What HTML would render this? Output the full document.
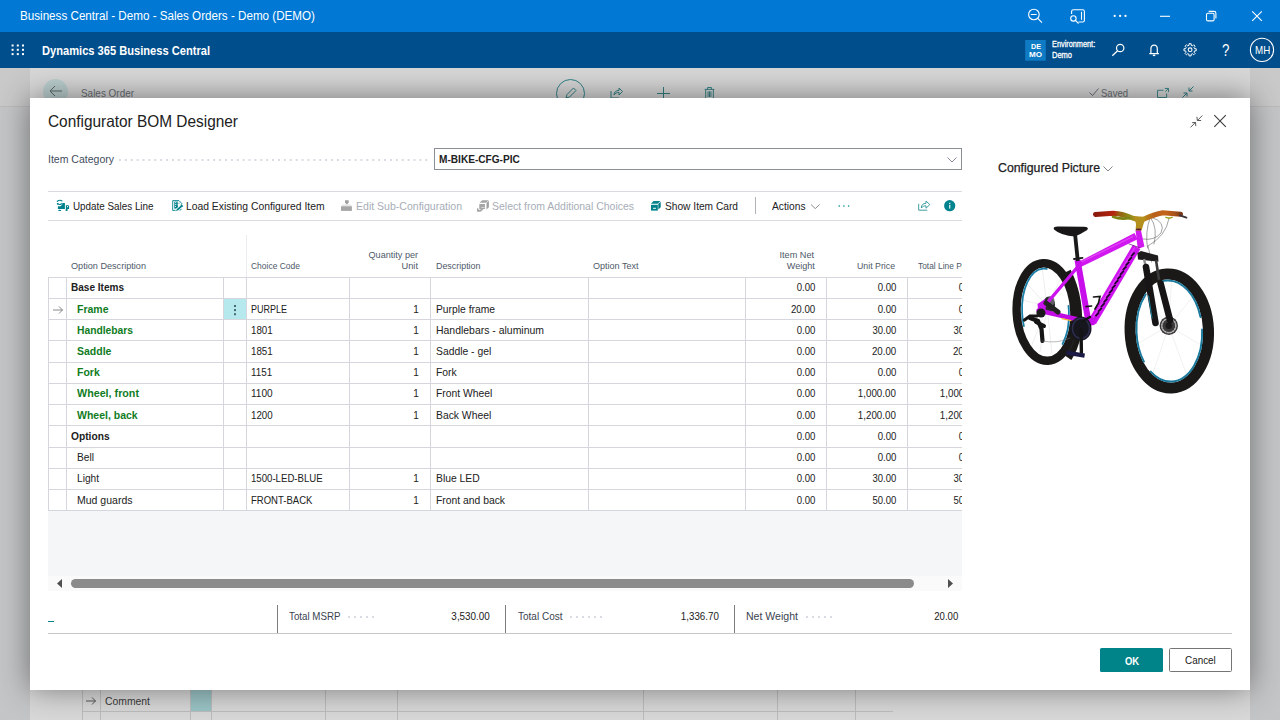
<!DOCTYPE html>
<html><head><meta charset="utf-8"><title>Business Central</title>
<style>
html,body{margin:0;padding:0;}
body{width:1280px;height:720px;overflow:hidden;position:relative;background:#c4c5c6;font-family:"Liberation Sans",sans-serif;}
.a{position:absolute;}
.t{position:absolute;white-space:nowrap;display:block;}
.hl{position:absolute;height:1px;background:#d6d7de;}
.vl{position:absolute;width:1px;background:#d6d7de;}
svg{position:absolute;overflow:visible;}
</style></head><body>

<!-- ===== background page (dimmed) ===== -->
<div class="a" style="left:0;top:68px;width:1280px;height:38px;background:#c9c9c9;"></div>
<div class="a" style="left:0;top:106px;width:1280px;height:1px;background:#bababa;"></div>
<div class="a" id="card" style="left:30px;top:68px;width:1220px;height:652px;background:#d8d8d8;"></div>
<!-- back circle -->
<div class="a" style="left:43px;top:78.7px;width:25px;height:25px;border-radius:50%;background:#bccfcf;"></div>
<svg style="left:49px;top:84.8px" width="14" height="12" viewBox="0 0 14 12"><path d="M6 1 L1 6 L6 11 M1 6 H13" fill="none" stroke="#5c6a6a" stroke-width="1"/></svg>
<!-- edit circle -->
<div class="a" style="left:556px;top:78.7px;width:29px;height:29px;border-radius:50%;border:1px solid #2f8388;box-sizing:border-box;"></div>
<svg style="left:563.5px;top:86px" width="14" height="14" viewBox="0 0 14 14"><path d="M2 12 L3 8.5 L9.5 2 L12 4.5 L5.5 11 Z" fill="none" stroke="#2f7f83" stroke-width="1"/></svg>
<!-- share -->
<svg style="left:610px;top:86.8px" width="13" height="12" viewBox="0 0 13 12"><path d="M1 4 V11 H9 M4 8 C4 5 6 3.5 9 3.5 V1 L12.5 4.5 L9 8 V5.5 C7 5.5 5.5 6 4 8 Z" fill="none" stroke="#2f7f83" stroke-width="1"/></svg>
<!-- plus -->
<svg style="left:657px;top:86.6px" width="13" height="13" viewBox="0 0 13 13"><path d="M6.5 0 V13 M0 6.5 H13" stroke="#2f7f83" stroke-width="1" fill="none"/></svg>
<!-- trash -->
<svg style="left:704px;top:87px" width="11" height="12.4" viewBox="0 0 11 13"><path d="M0.5 2.5 H10.5 M3.5 2.5 V0.5 H7.5 V2.5 M1.5 2.5 V12.5 H9.5 V2.5 M4 4.5 V10.5 M5.5 4.5 V10.5 M7 4.5 V10.5" stroke="#2f7f83" stroke-width="1" fill="none"/></svg>
<!-- saved check -->
<svg style="left:1089px;top:88px" width="10" height="8" viewBox="0 0 10 8"><path d="M0.5 4.5 L3.5 7.5 L9.5 0.5" stroke="#6a6f74" stroke-width="1" fill="none"/></svg>
<!-- popout -->
<svg style="left:1156.8px;top:88.2px" width="12" height="10" viewBox="0 0 13 11"><path d="M7 2.5 H0.5 V10.5 H10.5 V6 M8.5 0.5 H12.5 V4.5 M12.5 0.5 L9 4" stroke="#358589" stroke-width="1.05" fill="none"/></svg>
<!-- collapse -->
<svg style="left:1182px;top:86px" width="12" height="12" viewBox="0 0 12 12"><path d="M11.5 0.5 L7 5 M7 1.5 V5 H10.5 M0.5 11.5 L5 7 M1.5 7 H5 V10.5" stroke="#2f7f83" stroke-width="1" fill="none"/></svg>
<!-- bottom table on page -->
<div class="a" style="left:82px;top:690px;width:811px;height:30px;">
  <div class="a" style="left:108px;top:0;width:21px;height:21px;background:#9bc4c6;"></div>
  <div class="hl" style="left:0;top:21px;width:811px;background:#bcbcbc;"></div>
  <div class="vl" style="left:0;top:0;height:30px;background:#bcbcbc;"></div>
  <div class="vl" style="left:18px;top:0;height:30px;background:#bcbcbc;"></div>
  <div class="vl" style="left:108px;top:0;height:30px;background:#bcbcbc;"></div>
  <div class="vl" style="left:129px;top:0;height:30px;background:#bcbcbc;"></div>
  <div class="vl" style="left:243px;top:0;height:30px;background:#bcbcbc;"></div>
  <div class="vl" style="left:315px;top:0;height:30px;background:#bcbcbc;"></div>
  <div class="vl" style="left:561px;top:0;height:30px;background:#bcbcbc;"></div>
  <div class="vl" style="left:695px;top:0;height:30px;background:#bcbcbc;"></div>
  <div class="vl" style="left:773px;top:0;height:30px;background:#bcbcbc;"></div>
</div>
<svg style="left:86px;top:697px" width="10" height="8" viewBox="0 0 10 8"><path d="M0 4 H9.5 M6 0.5 L9.5 4 L6 7.5" stroke="#555" stroke-width="1" fill="none"/></svg>
<span class="t" style="top:86px;left:81px;transform-origin:0 50%;font-size:10.5px;line-height:15px;color:#6a6f74;transform:scaleX(0.9459);">Sales Order</span>
<span class="t" style="top:86px;left:1101px;transform-origin:0 50%;font-size:10.5px;line-height:15px;color:#6a6f74;transform:scaleX(0.9066);">Saved</span>
<span class="t" style="top:694px;left:105px;transform-origin:0 50%;font-size:10.5px;line-height:15px;color:#3a3a3a;transform:scaleX(0.9887);">Comment</span>

<!-- ===== dialog ===== -->
<div class="a" id="dlg" style="left:30px;top:98px;width:1220px;height:592px;background:#fff;box-shadow:0 -1px 29px rgba(0,0,0,.46);"></div>

<!-- dialog header icons -->
<svg style="left:1189.5px;top:114.5px" width="13" height="13" viewBox="0 0 13 13"><path d="M12.4 0.5 L7.4 5.5 M6.9 1.8 L7.4 5.5 L11.1 5.5 M0.5 12.4 L5.5 7.4 M2.1 7.7 L5.5 7.4 L5.8 11.1" stroke="#4a4a4a" stroke-width="0.9" fill="none"/></svg>
<svg style="left:1214px;top:115px" width="12" height="12" viewBox="0 0 12 12"><path d="M0.3 0.2 L11.8 11.8 M11.8 0.2 L0.3 11.8" stroke="#3c3c3c" stroke-width="1.1" fill="none"/></svg>

<!-- Item category field -->
<div class="a" style="left:117.3px;top:159px;width:314px;height:2px;background-image:radial-gradient(circle,#cfd1dc 0.65px,transparent 0.9px);background-size:5.9px 2px;"></div>
<div class="a" style="left:434px;top:148px;width:528px;height:22px;border:1px solid #8a8f96;box-sizing:border-box;background:#fff;"></div>
<svg style="left:946.5px;top:156.5px" width="10" height="6" viewBox="0 0 10 6"><path d="M0.5 0.5 L5 5 L9.5 0.5" stroke="#787890" stroke-width="0.9" fill="none"/></svg>
<!-- Configured picture chevron -->
<svg style="left:1102.5px;top:166px" width="10" height="6" viewBox="0 0 10 6"><path d="M0.5 0.5 L5 5 L9.5 0.5" stroke="#777" stroke-width="0.9" fill="none"/></svg>

<!-- action bar -->
<div class="hl" style="left:48px;top:191px;width:914px;background:#d9dae2;"></div>
<div class="hl" style="left:48px;top:220px;width:914px;background:#d9dae2;"></div>
<div class="vl" style="left:755px;top:197px;height:17px;background:#b0b3b8;"></div>
<svg style="left:0;top:190px" width="1280" height="32" viewBox="0 190 1280 32" fill="none">
<!-- Update sales line icon: truck with refresh arrows -->
<g fill="#00808a" stroke="none">
<path d="M57.9 206.3 H60.6 L62.3 204.6 V203 H64.9 V208.9 H57.9 Z"/>
<path d="M65.9 205.3 H68 Q69.1 205.3 69.1 206.6 V208.9 H65.9 Z"/>
<ellipse cx="59.7" cy="210.4" rx="1.5" ry="0.7"/><ellipse cx="66.6" cy="210" rx="1.2" ry="0.9"/>
</g>
<rect x="67" y="206.1" width="1" height="1.1" fill="#fff"/>
<g stroke="#00808a" stroke-width="1.1" stroke-linecap="round">
<path d="M57.3 201.3 Q59.6 199.5 62 200.9"/>
<path d="M57.4 203.6 Q59.4 205.3 61.6 203.7"/>
</g>
<path d="M57 203 H59 L57 205 Z" fill="#00808a"/>
<!-- Load existing icon: doc + pencil -->
<g stroke="#00808a" stroke-width="0.9">
<path d="M175.4 210.4 H172.7 V200.6 H179 L181.7 203.4 V204.4"/>
</g>
<rect x="174.3" y="201.6" width="3.6" height="7" fill="#00808a"/>
<g fill="#fff"><rect x="175" y="202.3" width="0.9" height="0.9"/><rect x="176.7" y="202.3" width="0.7" height="0.9"/><rect x="175" y="204.2" width="0.9" height="0.9"/><rect x="176.7" y="204.2" width="0.7" height="0.9"/><rect x="175" y="206.1" width="0.9" height="0.9"/></g>
<path d="M178.4 203.2 H179.6" stroke="#00808a" stroke-width="0.7"/>
<path d="M175.3 211.2 L176.2 208.8 L180.9 204.6 L182.8 206.4 L178 210.6 Z" fill="#fff"/>
<path d="M177.6 209.6 L181.2 206.4" stroke="#00808a" stroke-width="1.9" stroke-linecap="round"/>
<path d="M181.2 205 L182.6 206.2" stroke="#00808a" stroke-width="1.2" stroke-linecap="round"/>
<path d="M175.4 211.2 L176 209.6 L177 210.6 Z" fill="#00808a"/>
<path d="M179.5 210.2 Q181.3 210.2 181.5 208.8" stroke="#00808a" stroke-width="0.8"/>
<!-- Edit sub config (disabled): pencil into box -->
<g stroke="none">
<path d="M345 200.2 H348.7 V202.4 L346.85 204.8 L345 202.4 Z" fill="#a0a0a0"/>
<path d="M342.5 204.4 H351 L352 206.4 H341 Z" fill="#e4e4e4"/>
<path d="M345 202.4 L346.85 204.8 L348.7 202.4 V204.4 L346.85 206 L345 204.4 Z" fill="#a0a0a0" opacity="0"/>
<rect x="341" y="206.3" width="10.9" height="4.6" fill="#a6a6a6"/>
</g>
<!-- Select from additional (disabled): box + arrow -->
<g stroke="none">
<path d="M479.4 202.7 L482.2 200.2 H488.8 L486 202.7 Z" fill="#a4a4a4"/>
<path d="M486.5 203 L488.9 200.8 V207.2 L486.5 209.5 Z" fill="#a0a0a0"/>
<rect x="479.3" y="204" width="5.6" height="5" fill="#a6a6a6"/>
<path d="M477 208.3 L478 208.3 L479 210 L482.8 208.6 L483.3 209.6 L480.6 211.8 H477 Z" fill="#a6a6a6"/>
</g>
<rect x="481.2" y="207.1" width="3.4" height="0.7" fill="#e8e8e8"/>
<!-- Show item card: teal box -->
<g stroke="none">
<path d="M651 203.8 L653.5 201.1 H660.4 L657.9 203.8 Z" fill="#0a858e"/>
<path d="M658.3 204.1 L660.7 201.7 V207.2 L658.3 209.6 Z" fill="#007a84"/>
<rect x="651" y="204.8" width="6.8" height="5.8" fill="#00808a"/>
<rect x="653.1" y="207.8" width="2.8" height="1" fill="#fff"/>
</g>
<!-- chevron -->
<path d="M811 204.5 L815.3 208.6 L819.6 204.5" stroke="#8e8e8e" stroke-width="1"/>
<!-- dots -->
<g fill="#00838f"><circle cx="839.2" cy="206" r="0.8"/><circle cx="843.9" cy="206" r="0.8"/><circle cx="848.6" cy="206" r="0.8"/></g>
<!-- share -->
<path d="M918.7 203.8 V210.2 H927.2 M921.3 208 C921.3 205 923 203.3 926 203.3 V201 L929.8 204.6 L926 208.2 V205.8 C924 205.8 922.5 206.3 921.3 208 Z" stroke="#2d9499" stroke-width="0.9"/>
<!-- info -->
<circle cx="949.7" cy="205.7" r="5.6" fill="#00838f"/>
<rect x="949.2" y="204.8" width="1.1" height="3.8" fill="#fff"/><rect x="949.2" y="202.8" width="1.1" height="1.2" fill="#fff"/>
</svg>


<!-- table -->
<div class="a" style="left:48px;top:511px;width:914px;height:65px;background:#f5f6f8;"></div>
<div class="a" style="left:48px;top:576px;width:914px;height:15px;background:#fafafa;"></div>
<div class="a" style="left:223px;top:298px;width:23px;height:22px;background:#b5e9ed;"></div>
<div class="hl" style="left:48px;top:277px;width:914px;"></div>
<div class="hl" style="left:48px;top:298px;width:914px;"></div>
<div class="hl" style="left:48px;top:319px;width:914px;"></div>
<div class="hl" style="left:48px;top:340px;width:914px;"></div>
<div class="hl" style="left:48px;top:362px;width:914px;"></div>
<div class="hl" style="left:48px;top:383px;width:914px;"></div>
<div class="hl" style="left:48px;top:404px;width:914px;"></div>
<div class="hl" style="left:48px;top:425px;width:914px;"></div>
<div class="hl" style="left:48px;top:447px;width:914px;"></div>
<div class="hl" style="left:48px;top:468px;width:914px;"></div>
<div class="hl" style="left:48px;top:489px;width:914px;"></div>
<div class="hl" style="left:48px;top:510px;width:914px;"></div>
<div class="vl" style="left:48px;top:277px;height:234px;"></div>
<div class="vl" style="left:66px;top:277px;height:234px;"></div>
<div class="vl" style="left:223px;top:277px;height:234px;"></div>
<div class="vl" style="left:246px;top:277px;height:234px;"></div>
<div class="vl" style="left:349px;top:277px;height:234px;"></div>
<div class="vl" style="left:430px;top:277px;height:234px;"></div>
<div class="vl" style="left:588px;top:277px;height:234px;"></div>
<div class="vl" style="left:745px;top:277px;height:234px;"></div>
<div class="vl" style="left:826px;top:277px;height:234px;"></div>
<div class="vl" style="left:907px;top:277px;height:234px;"></div>
<div class="vl" style="left:246px;top:235px;height:42px;background:#ececf0;"></div>
<svg style="left:53px;top:305.6px" width="10" height="8" viewBox="0 0 10 8"><path d="M0 4 H9.5 M6 0.5 L9.5 4 L6 7.5" stroke="#7a7a7a" stroke-width="0.9" fill="none"/></svg>
<div class="a" style="left:234.2px;top:304.9px;width:1.8px;height:1.8px;background:#456873;box-shadow:0 4.1px 0 #456873,0 8.2px 0 #456873;"></div>

<!-- scrollbar -->
<div class="a" style="left:71px;top:579px;width:843px;height:9px;border-radius:4.5px;background:#8b8b8b;"></div>
<svg style="left:57px;top:579px" width="5" height="9" viewBox="0 0 5 9"><path d="M5 0 L0 4.5 L5 9 Z" fill="#505050"/></svg>
<svg style="left:948px;top:579px" width="5" height="9" viewBox="0 0 5 9"><path d="M0 0 L5 4.5 L0 9 Z" fill="#505050"/></svg>

<!-- footer totals -->
<div class="a" style="left:48px;top:621px;width:6px;height:1px;background:#00838a;"></div>
<div class="hl" style="left:48px;top:633px;width:1184px;background:#c8c8c8;"></div>
<div class="vl" style="left:277px;top:605px;height:28px;background:#7c7c7c;"></div>
<div class="vl" style="left:505px;top:605px;height:28px;background:#7c7c7c;"></div>
<div class="vl" style="left:734px;top:605px;height:28px;background:#7c7c7c;"></div>
<div class="a" style="left:346px;top:615.5px;width:30px;height:2px;background-image:radial-gradient(circle,#cfd1dc 0.65px,transparent 0.9px);background-size:6px 2px;"></div>
<div class="a" style="left:568px;top:615.5px;width:36px;height:2px;background-image:radial-gradient(circle,#cfd1dc 0.65px,transparent 0.9px);background-size:6px 2px;"></div>
<div class="a" style="left:803.5px;top:615.5px;width:30px;height:2px;background-image:radial-gradient(circle,#cfd1dc 0.65px,transparent 0.9px);background-size:6px 2px;"></div>

<!-- buttons -->
<div class="a" style="left:1100px;top:648px;width:63px;height:24px;background:#008489;border-radius:1.5px;"></div>
<div class="a" style="left:1169px;top:648px;width:63px;height:24px;border:1px solid #757575;box-sizing:border-box;background:#fff;border-radius:1.5px;"></div>

<svg style="left:990px;top:190px" width="250" height="220" viewBox="990 190 250 220" fill="none" stroke-linecap="round">
<defs>
<linearGradient id="hbl" x1="0" x2="1" y1="0" y2="0">
<stop offset="0" stop-color="#8a1a0c"/><stop offset="0.45" stop-color="#b82410"/><stop offset="0.55" stop-color="#9a5a12"/><stop offset="0.8" stop-color="#8c8a18"/><stop offset="1" stop-color="#b0901c"/>
</linearGradient>
<linearGradient id="hbr" x1="0" x2="1" y1="0" y2="0">
<stop offset="0" stop-color="#b88a1a"/><stop offset="0.3" stop-color="#b8601a"/><stop offset="0.6" stop-color="#c4641a"/><stop offset="0.85" stop-color="#a8521a"/><stop offset="1" stop-color="#7a3a1a"/>
</linearGradient>
</defs>
<!-- back wheel spokes -->
<g stroke="#dcdcdc" stroke-width="0.5">
<path d="M1047 306 L1022 278 M1047 306 L1018 322 M1047 306 L1030 350 M1047 306 L1052 354 M1047 306 L1042 266 M1047 306 L1064 272 M1047 306 L1022 300 M1047 306 L1040 352"/>
</g>
<!-- back wheel tyre -->
<ellipse cx="1045.5" cy="312" rx="28.8" ry="48.8" stroke="#1b1818" stroke-width="8.4" transform="rotate(-3 1045.5 312)"/>
<ellipse cx="1045.5" cy="312" rx="23.4" ry="43.4" stroke="#1a7ea6" stroke-width="1.8" stroke-dasharray="34 60 70 45" transform="rotate(-3 1045.5 312)"/>
<!-- near side thick tread -->
<path d="M1066 272 Q1080 300 1076 334 Q1073 348 1067 357" stroke="#1b1818" stroke-width="10.5" stroke-linecap="butt"/>
<!-- rear hub / cassette / disc -->
<ellipse cx="1049" cy="305" rx="6" ry="8.5" fill="#2a2a2e"/>
<ellipse cx="1051" cy="301" rx="3.5" ry="5" fill="#6e6e72" opacity="0.8"/>
<!-- seat stays / chain stays -->
<path d="M1078 266.5 L1042.5 308.5" stroke="#cc12ee" stroke-width="3.4"/>
<path d="M1087 321.5 L1038.5 310.5" stroke="#c20ce4" stroke-width="4.4"/>
<path d="M1062 318.6 L1071 320.6" stroke="#f0b040" stroke-width="1.2"/>
<path d="M1037.5 304 L1045 299 L1046 314 L1038.5 314 Z" fill="#c810ec" stroke="none"/>
<!-- derailleur -->
<path d="M1030 318 L1038 321 L1041.5 329 L1042.5 341" stroke="#151515" stroke-width="4.2"/>
<path d="M1024.5 320 L1030 316 L1037 316" stroke="#151515" stroke-width="3.2"/>
<path d="M1036 322 L1044 326" stroke="#151515" stroke-width="4"/>
<circle cx="1041" cy="313" r="4.6" fill="#1a1a1a"/>
<path d="M1046 303 L1058 312" stroke="#222" stroke-width="5"/>
<path d="M1042 341 Q1058 344 1070 338" stroke="#777" stroke-width="0.5"/>
<!-- front wheel spokes -->
<g stroke="#e2e2e2" stroke-width="0.5">
<path d="M1168.8 326 L1140 292 M1168.8 326 L1135 345 M1168.8 326 L1150 382 M1168.8 326 L1190 384 M1168.8 326 L1206 348 M1168.8 326 L1200 288 M1168.8 326 L1172 272"/>
</g>
<!-- front wheel -->
<ellipse cx="1169.3" cy="331" rx="39.2" ry="57" stroke="#1b1818" stroke-width="11" transform="rotate(-2.5 1169.3 331)"/>
<ellipse cx="1169.3" cy="331" rx="32.8" ry="50.6" stroke="#1a7a9e" stroke-width="1.9" stroke-dasharray="90 12 70 20 60 30" transform="rotate(-2.5 1169.3 331)"/>
<!-- front disc -->
<circle cx="1168.8" cy="325.7" r="9.2" fill="#3a3838"/>
<circle cx="1168.8" cy="325.7" r="7" stroke="#b4b4b4" stroke-width="1.6" stroke-dasharray="1.2 1.6"/>
<circle cx="1168.8" cy="325.7" r="3.2" fill="#1a1a1a"/>
<!-- cables -->
<g stroke="#4a4a4a" stroke-width="0.5">
<path d="M1150 218 Q1145 232 1147.5 248"/>
<path d="M1150.5 217.5 Q1158 228 1154 244"/>
<path d="M1152 217.5 Q1166 222 1161 233 Q1154 241 1143 239"/>
<path d="M1169 218.5 Q1166 236 1148 246"/>
<path d="M1148 246 L1151.5 262"/>
</g>
<!-- frame -->
<path d="M1077.2 262.5 L1079.8 267.6 L1137.6 239.3 L1134.5 233.1 Z" fill="#d218f0" stroke="none"/>
<path d="M1136.6 247 L1092.2 322" stroke="#cf12f0" stroke-width="8.6" stroke-linecap="butt"/>
<path d="M1077.5 260 L1088.3 321" stroke="#c80eea" stroke-width="6" stroke-linecap="butt"/>
<path d="M1135.5 230 H1140.9 L1144.4 246.5 L1137.8 249 Z" fill="#d21af0" stroke="none"/>
<path d="M1085.5 318 L1096.5 316 L1094.5 325 L1086.5 326 Z" fill="#c60ce8" stroke="none"/>
<!-- tube highlights/shades -->
<path d="M1082 261.6 L1133 236.4" stroke="#e860f8" stroke-width="1.1" opacity="0.7"/>
<path d="M1134.4 248 L1093 317.5" stroke="#e458f6" stroke-width="1.2" opacity="0.7"/>
<path d="M1129 244 L1139.5 247.6" stroke="#6a1a7a" stroke-width="0.7"/>
<!-- lettering on down tube -->
<g stroke="#1e0628" stroke-width="1.7" stroke-linecap="butt">
<path d="M1134.6 252.5 L1131.2 256.3"/><path d="M1131.9 257.2 L1128.3 261"/><path d="M1129.2 261.8 L1125.6 265.6"/><path d="M1126.4 266.4 L1122.8 270.2"/><path d="M1123.7 271 L1120.1 274.8"/><path d="M1121 275.6 L1117.4 279.4"/><path d="M1118.2 280.2 L1114.6 284"/><path d="M1115.5 284.8 L1111.9 288.6"/><path d="M1112.8 289.4 L1109.2 293.2"/><path d="M1110 294 L1106.4 297.8"/><path d="M1107.3 298.6 L1103.7 302.4"/><path d="M1104.6 303.2 L1101 307"/><path d="M1101.8 307.8 L1098.2 311.6"/><path d="M1099.1 312.4 L1095.5 316.2"/>
</g>
<!-- bottle cage -->
<path d="M1093.5 297 L1100 296.5 L1098.5 303 L1095 309" stroke="#151515" stroke-width="1.7"/>
<!-- seat post & saddle -->
<path d="M1075.2 235.5 L1077.8 261" stroke="#1a1a1a" stroke-width="3.8" stroke-linecap="butt"/>
<path d="M1074 259 L1082.5 257.8" stroke="#1a1a1a" stroke-width="1.8"/>
<path d="M1054 229.4 Q1052.5 226.6 1058 226.6 L1084 226.8 Q1089.5 227.2 1087.2 230 Q1081 234 1075 236.4 Q1061 235.6 1054 229.4 Z" fill="#181616"/>
<!-- fork -->
<path d="M1137.4 253 L1141 251 L1158 255.5 L1158.5 261.5 L1152 261 L1138 259.5 Z" fill="#1e1c1c"/>
<path d="M1144 259 L1146.5 270" stroke="#8c8c8c" stroke-width="2.4" stroke-linecap="butt"/>
<path d="M1156 260 L1159.5 283" stroke="#3a3a3a" stroke-width="2.6" stroke-linecap="butt"/>
<path d="M1146 267 L1155.5 323" stroke="#171515" stroke-width="6.6"/>
<path d="M1160.5 283 L1170 320" stroke="#171515" stroke-width="6.6"/>
<path d="M1148.6 296 L1152 318" stroke="#1a7f9f" stroke-width="1"/>
<!-- crankset -->
<ellipse cx="1081" cy="328.5" rx="10.5" ry="12" fill="#16161e"/>
<ellipse cx="1081" cy="328.5" rx="8.5" ry="10" stroke="#2e2e50" stroke-width="1.6" stroke-dasharray="1 1"/>
<path d="M1081 330 L1081.4 352.5" stroke="#141414" stroke-width="3.4"/>
<path d="M1074 340 L1069 352" stroke="#222" stroke-width="1.6"/>
<path d="M1066.4 352.6 L1084.6 355.6" stroke="#1a1a44" stroke-width="4.4" stroke-linecap="butt"/>
<path d="M1083 321 L1090 317" stroke="#151515" stroke-width="2.4"/>
<path d="M1086 306.6 L1091.6 306" stroke="#151515" stroke-width="1.6"/>
<!-- handlebar -->
<path d="M1095.5 214.4 L1113 213.2 Q1124 214 1131 217.5 L1137 219.5" stroke="url(#hbl)" stroke-width="5"/>
<path d="M1113 216.8 Q1120 219.5 1129 218.2" stroke="#7c8414" stroke-width="2.6"/>
<path d="M1143 219.5 Q1154 214.5 1163 212.8 L1180.5 214.2" stroke="url(#hbr)" stroke-width="5"/>
<path d="M1180 215.4 L1186.4 217.6" stroke="#3c3434" stroke-width="1.9"/>
<path d="M1134 216 L1146 217 L1143.5 224 L1141.6 230.4 L1135.6 230.4 L1136 224 Z" fill="#b4901c" stroke="none"/>
<path d="M1136.2 229.4 L1141 229.4" stroke="#5a1a3a" stroke-width="1.6" stroke-linecap="butt"/>
<path d="M1166 217.4 Q1169 218.8 1172 217.4" stroke="#a0a018" stroke-width="1.6"/>
</svg>


<div class="a" style="left:0;top:0;width:1280px;height:720px;clip-path:inset(0 318px 0 0);">
<span class="t" style="top:280px;right:302.5px;transform-origin:100% 50%;font-size:10.5px;line-height:15px;color:#212121;transform:scaleX(0.9150);">0.00</span>
<span class="t" style="top:302px;right:302.5px;transform-origin:100% 50%;font-size:10.5px;line-height:15px;color:#212121;transform:scaleX(0.9150);">0.00</span>
<span class="t" style="top:323px;right:302.5px;transform-origin:100% 50%;font-size:10.5px;line-height:15px;color:#212121;transform:scaleX(0.9056);">30.00</span>
<span class="t" style="top:344px;right:302.5px;transform-origin:100% 50%;font-size:10.5px;line-height:15px;color:#212121;transform:scaleX(0.9284);">20.00</span>
<span class="t" style="top:365px;right:302.5px;transform-origin:100% 50%;font-size:10.5px;line-height:15px;color:#212121;transform:scaleX(0.9150);">0.00</span>
<span class="t" style="top:386px;right:302.5px;transform-origin:100% 50%;font-size:10.5px;line-height:15px;color:#212121;transform:scaleX(0.9297);">1,000.00</span>
<span class="t" style="top:408px;right:302.5px;transform-origin:100% 50%;font-size:10.5px;line-height:15px;color:#212121;transform:scaleX(0.9297);">1,200.00</span>
<span class="t" style="top:429px;right:302.5px;transform-origin:100% 50%;font-size:10.5px;line-height:15px;color:#212121;transform:scaleX(0.9150);">0.00</span>
<span class="t" style="top:450px;right:302.5px;transform-origin:100% 50%;font-size:10.5px;line-height:15px;color:#212121;transform:scaleX(0.9150);">0.00</span>
<span class="t" style="top:471px;right:302.5px;transform-origin:100% 50%;font-size:10.5px;line-height:15px;color:#212121;transform:scaleX(0.9056);">30.00</span>
<span class="t" style="top:493px;right:302.5px;transform-origin:100% 50%;font-size:10.5px;line-height:15px;color:#212121;transform:scaleX(0.9056);">50.00</span>
<span class="t" style="top:260px;left:918px;transform-origin:0 50%;font-size:9px;line-height:13px;color:#4e5968;transform:scaleX(0.9300);">Total Line Price</span>
</div>

<!-- ===== top bars ===== -->
<div class="a" style="left:0;top:0;width:1280px;height:32px;background:#0078d4;"></div>
<div class="a" style="left:0;top:32px;width:1280px;height:36px;background:#004e8c;"></div>
<svg style="left:0;top:0" width="1280" height="68" viewBox="0 0 1280 68" fill="none" stroke="#fff" stroke-width="1.1">
<!-- zoom out -->
<circle cx="1033.9" cy="14.5" r="5.3"/><path d="M1037.8 18.3 L1042 22.7 M1030.8 14.5 H1036.6"/>
<!-- cast -->
<path d="M1071.6 14 V11.5 Q1071.6 9.7 1073.4 9.7 H1082.6 Q1084.4 9.7 1084.4 11.5 V20.2 Q1084.4 22 1082.6 22 H1078.6 M1081.5 11.8 V19.8"/>
<circle cx="1073.4" cy="18.4" r="2.7"/><path d="M1075.4 20.4 L1078.6 23.5"/>
<!-- dots -->
<g fill="#fff" stroke="none"><circle cx="1114.7" cy="15.9" r="1.15"/><circle cx="1120.1" cy="15.9" r="1.15"/><circle cx="1125.5" cy="15.9" r="1.15"/></g>
<!-- min -->
<path d="M1160 16.3 H1170"/>
<!-- restore -->
<rect x="1206.5" y="13.3" width="7.6" height="7.6" rx="1.4"/>
<path d="M1208.6 11.4 H1214 Q1215.9 11.4 1215.9 13.3 V18.6"/>
<!-- close -->
<path d="M1252.2 11.3 L1261.8 20.9 M1261.8 11.3 L1252.2 20.9"/>
<!-- waffle -->
<g fill="#fff" stroke="none">
<rect x="11.6" y="44.5" width="2" height="2"/><rect x="16.8" y="44.5" width="2" height="2"/><rect x="22" y="44.5" width="2" height="2"/>
<rect x="11.6" y="48.8" width="2" height="2"/><rect x="16.8" y="48.8" width="2" height="2"/><rect x="22" y="48.8" width="2" height="2"/>
<rect x="11.6" y="53.1" width="2" height="2"/><rect x="16.8" y="53.1" width="2" height="2"/><rect x="22" y="53.1" width="2" height="2"/>
</g>
<!-- demo badge -->
<rect x="1025.2" y="40" width="20.6" height="20.7" fill="#0f7bc4" stroke="none"/>
<!-- search -->
<circle cx="1120.2" cy="48" r="3.7" stroke-width="1.2"/><path d="M1117.6 50.7 L1112.3 55.8" stroke-width="1.2"/>
<!-- bell -->
<path d="M1150.9 53.6 V49 Q1150.9 45.1 1154.1 45.1 Q1157.3 45.1 1157.3 49 V53.6 M1149.3 53.6 H1158.9 M1153 55 Q1154.1 56 1155.2 55" stroke-width="1.2"/>
<!-- gear -->
<circle cx="1190.1" cy="49.8" r="1.9"/>
<path d="M1196.21 48.73 L1196.21 50.87 L1194.57 50.87 L1194.02 52.20 L1195.17 53.37 L1193.67 54.87 L1192.50 53.72 L1191.17 54.27 L1191.17 55.91 L1189.03 55.91 L1189.03 54.27 L1187.70 53.72 L1186.53 54.87 L1185.03 53.37 L1186.18 52.20 L1185.63 50.87 L1183.99 50.87 L1183.99 48.73 L1185.63 48.73 L1186.18 47.40 L1185.03 46.23 L1186.53 44.73 L1187.70 45.88 L1189.03 45.33 L1189.03 43.69 L1191.17 43.69 L1191.17 45.33 L1192.50 45.88 L1193.67 44.73 L1195.17 46.23 L1194.02 47.40 L1194.57 48.73 Z" stroke-width="1" stroke-linejoin="round"/>
<!-- MH circle -->
<circle cx="1262" cy="49.9" r="11.6" stroke-width="1.1"/>
</svg>

<span class="t" style="top:7px;left:20px;transform-origin:0 50%;font-size:12.5px;line-height:18px;color:#fff;transform:scaleX(0.9313);">Business Central - Demo - Sales Orders - Demo (DEMO)</span>
<span class="t" style="top:43px;left:42px;transform-origin:0 50%;font-size:12px;line-height:17px;color:#fff;transform:scaleX(0.9260);font-weight:700;">Dynamics 365 Business Central</span>
<span class="t" style="top:41px;left:1030.8px;transform-origin:0 50%;font-size:8px;line-height:11px;color:#fff;transform:scaleX(0.8989);font-weight:700;">DE</span>
<span class="t" style="top:49px;left:1029px;transform-origin:0 50%;font-size:8px;line-height:11px;color:#fff;transform:scaleX(1.0085);font-weight:700;">MO</span>
<span class="t" style="top:38px;left:1051.6px;transform-origin:0 50%;font-size:9px;line-height:13px;color:#fff;transform:scaleX(0.8146);-webkit-text-stroke:0.3px #fff;">Environment:</span>
<span class="t" style="top:49px;left:1051.6px;transform-origin:0 50%;font-size:9px;line-height:13px;color:#fff;transform:scaleX(0.8328);-webkit-text-stroke:0.3px #fff;">Demo</span>
<span class="t" style="top:43px;left:1254.6px;transform-origin:0 50%;font-size:10.5px;line-height:15px;color:#fff;transform:scaleX(0.9300);">MH</span>
<span class="t" style="top:40px;left:1222px;transform-origin:0 50%;font-size:16px;line-height:22px;color:#fff;transform:scaleX(0.8309);">?</span>
<span class="t" style="top:110px;left:48px;transform-origin:0 50%;font-size:16.5px;line-height:23px;color:#212121;transform:scaleX(0.9332);">Configurator BOM Designer</span>
<span class="t" style="top:152px;left:48px;transform-origin:0 50%;font-size:10.5px;line-height:15px;color:#3f4d5c;transform:scaleX(1.0007);">Item Category</span>
<span class="t" style="top:152px;left:439px;transform-origin:0 50%;font-size:11px;line-height:15px;color:#212121;transform:scaleX(0.9182);font-weight:700;">M-BIKE-CFG-PIC</span>
<span class="t" style="top:160px;left:998px;transform-origin:0 50%;font-size:12px;line-height:17px;color:#212121;transform:scaleX(1.0263);-webkit-text-stroke:0.25px #212121;">Configured Picture</span>
<span class="t" style="top:199px;left:72.5px;transform-origin:0 50%;font-size:10.5px;line-height:15px;color:#212121;transform:scaleX(0.9381);">Update Sales Line</span>
<span class="t" style="top:199px;left:186px;transform-origin:0 50%;font-size:10.5px;line-height:15px;color:#212121;transform:scaleX(0.9846);">Load Existing Configured Item</span>
<span class="t" style="top:199px;left:356px;transform-origin:0 50%;font-size:10.5px;line-height:15px;color:#a7adb7;transform:scaleX(1.0033);">Edit Sub-Configuration</span>
<span class="t" style="top:199px;left:492px;transform-origin:0 50%;font-size:10.5px;line-height:15px;color:#a7adb7;transform:scaleX(0.9971);">Select from Additional Choices</span>
<span class="t" style="top:199px;left:665px;transform-origin:0 50%;font-size:10.5px;line-height:15px;color:#212121;transform:scaleX(0.9697);">Show Item Card</span>
<span class="t" style="top:199px;left:772px;transform-origin:0 50%;font-size:10.5px;line-height:15px;color:#212121;transform:scaleX(0.9728);">Actions</span>
<span class="t" style="top:260px;left:71px;transform-origin:0 50%;font-size:9px;line-height:13px;color:#4e5968;transform:scaleX(1.0129);">Option Description</span>
<span class="t" style="top:260px;left:251px;transform-origin:0 50%;font-size:9px;line-height:13px;color:#4e5968;transform:scaleX(0.9417);">Choice Code</span>
<span class="t" style="top:249px;right:861.5px;transform-origin:100% 50%;font-size:9px;line-height:13px;color:#4e5968;transform:scaleX(1.0096);">Quantity per</span>
<span class="t" style="top:260px;right:861.5px;transform-origin:100% 50%;font-size:9px;line-height:13px;color:#4e5968;transform:scaleX(1.0302);">Unit</span>
<span class="t" style="top:260px;left:435.5px;transform-origin:0 50%;font-size:9px;line-height:13px;color:#4e5968;transform:scaleX(0.9882);">Description</span>
<span class="t" style="top:260px;left:592.5px;transform-origin:0 50%;font-size:9px;line-height:13px;color:#4e5968;transform:scaleX(1.0028);">Option Text</span>
<span class="t" style="top:249px;right:465.5px;transform-origin:100% 50%;font-size:9px;line-height:13px;color:#4e5968;transform:scaleX(1.0142);">Item Net</span>
<span class="t" style="top:260px;right:465.5px;transform-origin:100% 50%;font-size:9px;line-height:13px;color:#4e5968;transform:scaleX(1.0050);">Weight</span>
<span class="t" style="top:260px;right:384.5px;transform-origin:100% 50%;font-size:9px;line-height:13px;color:#4e5968;transform:scaleX(0.9740);">Unit Price</span>
<span class="t" style="top:609px;left:289px;transform-origin:0 50%;font-size:10.5px;line-height:15px;color:#3a4450;transform:scaleX(0.9290);">Total MSRP</span>
<span class="t" style="top:609px;right:790px;transform-origin:100% 50%;font-size:10.5px;line-height:15px;color:#212121;transform:scaleX(0.9419);">3,530.00</span>
<span class="t" style="top:609px;left:518px;transform-origin:0 50%;font-size:10.5px;line-height:15px;color:#3a4450;transform:scaleX(0.9531);">Total Cost</span>
<span class="t" style="top:609px;right:561.5px;transform-origin:100% 50%;font-size:10.5px;line-height:15px;color:#212121;transform:scaleX(0.9297);">1,336.70</span>
<span class="t" style="top:609px;left:746.3px;transform-origin:0 50%;font-size:10.5px;line-height:15px;color:#3a4450;transform:scaleX(1.0048);">Net Weight</span>
<span class="t" style="top:609px;right:322px;transform-origin:100% 50%;font-size:10.5px;line-height:15px;color:#212121;transform:scaleX(0.9132);">20.00</span>
<span class="t" style="top:653px;left:1124.9px;transform-origin:0 50%;font-size:11.5px;line-height:16px;color:#fff;transform:scaleX(0.8232);font-weight:700;">OK</span>
<span class="t" style="top:653px;left:1184.9px;transform-origin:0 50%;font-size:11px;line-height:15px;color:#212121;transform:scaleX(0.8993);">Cancel</span>
<span class="t" style="top:280px;left:71px;transform-origin:0 50%;font-size:10.5px;line-height:15px;color:#212121;transform:scaleX(0.9558);font-weight:700;">Base Items</span>
<span class="t" style="top:280px;right:464.5px;transform-origin:100% 50%;font-size:10.5px;line-height:15px;color:#212121;transform:scaleX(0.9150);">0.00</span>
<span class="t" style="top:280px;right:383.70000000000005px;transform-origin:100% 50%;font-size:10.5px;line-height:15px;color:#212121;transform:scaleX(0.9150);">0.00</span>
<span class="t" style="top:302px;left:77px;transform-origin:0 50%;font-size:10.5px;line-height:15px;color:#107c1e;transform:scaleX(1.0000);font-weight:700;">Frame</span>
<span class="t" style="top:302px;left:251px;transform-origin:0 50%;font-size:10.5px;line-height:15px;color:#212121;transform:scaleX(0.8568);">PURPLE</span>
<span class="t" style="top:302px;right:861.5px;transform-origin:100% 50%;font-size:10.5px;line-height:15px;color:#212121;transform:scaleX(0.9500);">1</span>
<span class="t" style="top:302px;left:436px;transform-origin:0 50%;font-size:10.5px;line-height:15px;color:#212121;transform:scaleX(0.9815);">Purple frame</span>
<span class="t" style="top:302px;right:464.5px;transform-origin:100% 50%;font-size:10.5px;line-height:15px;color:#212121;transform:scaleX(0.9284);">20.00</span>
<span class="t" style="top:302px;right:383.70000000000005px;transform-origin:100% 50%;font-size:10.5px;line-height:15px;color:#212121;transform:scaleX(0.9150);">0.00</span>
<span class="t" style="top:323px;left:77px;transform-origin:0 50%;font-size:10.5px;line-height:15px;color:#107c1e;transform:scaleX(0.9792);font-weight:700;">Handlebars</span>
<span class="t" style="top:323px;left:251px;transform-origin:0 50%;font-size:10.5px;line-height:15px;color:#212121;transform:scaleX(0.9290);">1801</span>
<span class="t" style="top:323px;right:861.5px;transform-origin:100% 50%;font-size:10.5px;line-height:15px;color:#212121;transform:scaleX(0.9500);">1</span>
<span class="t" style="top:323px;left:436px;transform-origin:0 50%;font-size:10.5px;line-height:15px;color:#212121;transform:scaleX(0.9948);">Handlebars - aluminum</span>
<span class="t" style="top:323px;right:464.5px;transform-origin:100% 50%;font-size:10.5px;line-height:15px;color:#212121;transform:scaleX(0.9150);">0.00</span>
<span class="t" style="top:323px;right:383.70000000000005px;transform-origin:100% 50%;font-size:10.5px;line-height:15px;color:#212121;transform:scaleX(0.9056);">30.00</span>
<span class="t" style="top:344px;left:77px;transform-origin:0 50%;font-size:10.5px;line-height:15px;color:#107c1e;transform:scaleX(1.0000);font-weight:700;">Saddle</span>
<span class="t" style="top:344px;left:251px;transform-origin:0 50%;font-size:10.5px;line-height:15px;color:#212121;transform:scaleX(0.9290);">1851</span>
<span class="t" style="top:344px;right:861.5px;transform-origin:100% 50%;font-size:10.5px;line-height:15px;color:#212121;transform:scaleX(0.9500);">1</span>
<span class="t" style="top:344px;left:436px;transform-origin:0 50%;font-size:10.5px;line-height:15px;color:#212121;transform:scaleX(0.9850);">Saddle - gel</span>
<span class="t" style="top:344px;right:464.5px;transform-origin:100% 50%;font-size:10.5px;line-height:15px;color:#212121;transform:scaleX(0.9150);">0.00</span>
<span class="t" style="top:344px;right:383.70000000000005px;transform-origin:100% 50%;font-size:10.5px;line-height:15px;color:#212121;transform:scaleX(0.9284);">20.00</span>
<span class="t" style="top:365px;left:77px;transform-origin:0 50%;font-size:10.5px;line-height:15px;color:#107c1e;transform:scaleX(1.0000);font-weight:700;">Fork</span>
<span class="t" style="top:365px;left:251px;transform-origin:0 50%;font-size:10.5px;line-height:15px;color:#212121;transform:scaleX(0.9383);">1151</span>
<span class="t" style="top:365px;right:861.5px;transform-origin:100% 50%;font-size:10.5px;line-height:15px;color:#212121;transform:scaleX(0.9500);">1</span>
<span class="t" style="top:365px;left:436px;transform-origin:0 50%;font-size:10.5px;line-height:15px;color:#212121;transform:scaleX(0.9850);">Fork</span>
<span class="t" style="top:365px;right:464.5px;transform-origin:100% 50%;font-size:10.5px;line-height:15px;color:#212121;transform:scaleX(0.9150);">0.00</span>
<span class="t" style="top:365px;right:383.70000000000005px;transform-origin:100% 50%;font-size:10.5px;line-height:15px;color:#212121;transform:scaleX(0.9150);">0.00</span>
<span class="t" style="top:386px;left:77px;transform-origin:0 50%;font-size:10.5px;line-height:15px;color:#107c1e;transform:scaleX(1.0219);font-weight:700;">Wheel, front</span>
<span class="t" style="top:386px;left:251px;transform-origin:0 50%;font-size:10.5px;line-height:15px;color:#212121;transform:scaleX(0.9604);">1100</span>
<span class="t" style="top:386px;right:861.5px;transform-origin:100% 50%;font-size:10.5px;line-height:15px;color:#212121;transform:scaleX(0.9500);">1</span>
<span class="t" style="top:386px;left:436px;transform-origin:0 50%;font-size:10.5px;line-height:15px;color:#212121;transform:scaleX(0.9850);">Front Wheel</span>
<span class="t" style="top:386px;right:464.5px;transform-origin:100% 50%;font-size:10.5px;line-height:15px;color:#212121;transform:scaleX(0.9150);">0.00</span>
<span class="t" style="top:386px;right:383.70000000000005px;transform-origin:100% 50%;font-size:10.5px;line-height:15px;color:#212121;transform:scaleX(0.9297);">1,000.00</span>
<span class="t" style="top:408px;left:77px;transform-origin:0 50%;font-size:10.5px;line-height:15px;color:#107c1e;transform:scaleX(1.0000);font-weight:700;">Wheel, back</span>
<span class="t" style="top:408px;left:251px;transform-origin:0 50%;font-size:10.5px;line-height:15px;color:#212121;transform:scaleX(0.9290);">1200</span>
<span class="t" style="top:408px;right:861.5px;transform-origin:100% 50%;font-size:10.5px;line-height:15px;color:#212121;transform:scaleX(0.9500);">1</span>
<span class="t" style="top:408px;left:436px;transform-origin:0 50%;font-size:10.5px;line-height:15px;color:#212121;transform:scaleX(0.9850);">Back Wheel</span>
<span class="t" style="top:408px;right:464.5px;transform-origin:100% 50%;font-size:10.5px;line-height:15px;color:#212121;transform:scaleX(0.9150);">0.00</span>
<span class="t" style="top:408px;right:383.70000000000005px;transform-origin:100% 50%;font-size:10.5px;line-height:15px;color:#212121;transform:scaleX(0.9297);">1,200.00</span>
<span class="t" style="top:429px;left:71px;transform-origin:0 50%;font-size:10.5px;line-height:15px;color:#212121;transform:scaleX(0.9730);font-weight:700;">Options</span>
<span class="t" style="top:429px;right:464.5px;transform-origin:100% 50%;font-size:10.5px;line-height:15px;color:#212121;transform:scaleX(0.9150);">0.00</span>
<span class="t" style="top:429px;right:383.70000000000005px;transform-origin:100% 50%;font-size:10.5px;line-height:15px;color:#212121;transform:scaleX(0.9150);">0.00</span>
<span class="t" style="top:450px;left:77px;transform-origin:0 50%;font-size:10.5px;line-height:15px;color:#212121;transform:scaleX(0.9700);">Bell</span>
<span class="t" style="top:450px;right:464.5px;transform-origin:100% 50%;font-size:10.5px;line-height:15px;color:#212121;transform:scaleX(0.9150);">0.00</span>
<span class="t" style="top:450px;right:383.70000000000005px;transform-origin:100% 50%;font-size:10.5px;line-height:15px;color:#212121;transform:scaleX(0.9150);">0.00</span>
<span class="t" style="top:471px;left:77px;transform-origin:0 50%;font-size:10.5px;line-height:15px;color:#212121;transform:scaleX(0.9657);">Light</span>
<span class="t" style="top:471px;left:251px;transform-origin:0 50%;font-size:10.5px;line-height:15px;color:#212121;transform:scaleX(0.9167);">1500-LED-BLUE</span>
<span class="t" style="top:471px;right:861.5px;transform-origin:100% 50%;font-size:10.5px;line-height:15px;color:#212121;transform:scaleX(0.9500);">1</span>
<span class="t" style="top:471px;left:436px;transform-origin:0 50%;font-size:10.5px;line-height:15px;color:#212121;transform:scaleX(0.9850);">Blue LED</span>
<span class="t" style="top:471px;right:464.5px;transform-origin:100% 50%;font-size:10.5px;line-height:15px;color:#212121;transform:scaleX(0.9150);">0.00</span>
<span class="t" style="top:471px;right:383.70000000000005px;transform-origin:100% 50%;font-size:10.5px;line-height:15px;color:#212121;transform:scaleX(0.9056);">30.00</span>
<span class="t" style="top:493px;left:77px;transform-origin:0 50%;font-size:10.5px;line-height:15px;color:#212121;transform:scaleX(1.0008);">Mud guards</span>
<span class="t" style="top:493px;left:251px;transform-origin:0 50%;font-size:10.5px;line-height:15px;color:#212121;transform:scaleX(0.9073);">FRONT-BACK</span>
<span class="t" style="top:493px;right:861.5px;transform-origin:100% 50%;font-size:10.5px;line-height:15px;color:#212121;transform:scaleX(0.9500);">1</span>
<span class="t" style="top:493px;left:436px;transform-origin:0 50%;font-size:10.5px;line-height:15px;color:#212121;transform:scaleX(0.9850);">Front and back</span>
<span class="t" style="top:493px;right:464.5px;transform-origin:100% 50%;font-size:10.5px;line-height:15px;color:#212121;transform:scaleX(0.9150);">0.00</span>
<span class="t" style="top:493px;right:383.70000000000005px;transform-origin:100% 50%;font-size:10.5px;line-height:15px;color:#212121;transform:scaleX(0.9056);">50.00</span>
</body></html>
